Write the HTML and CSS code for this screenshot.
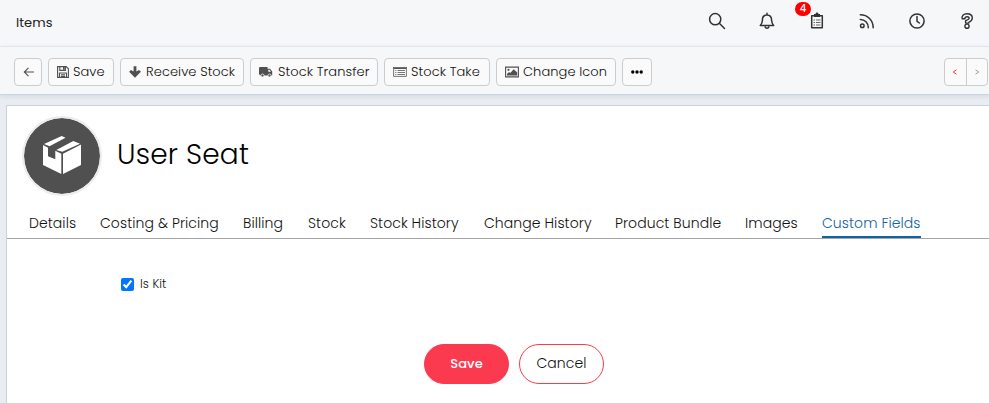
FILE: index.html
```html
<!DOCTYPE html>
<html lang="en">

<head>
    <meta charset="UTF-8">
    <meta name="viewport" content="width=device-width, initial-scale=1.0">
    <title>Items</title>
    <link rel="stylesheet" href="styles.css">
</head>

<body>
    <header class="topbar">
        <span class="page-name">Items</span>
        <nav class="top-icons">
            <a class="top-icon"><svg width="18" height="18" viewBox="0 0 18 18"><circle cx="7.2" cy="7.2" r="5.6" /><path d="M11.3 11.3l5.2 5.2" /></svg></a>
            <a class="top-icon"><svg width="18" height="18" viewBox="0 0 18 18"><path d="M9 1.200v1.600M2.300 13.400h13.400c-1.400-1.500-2.100-2.500-2.100-5.200C13.600 4.900 11.700 2.900 9 2.900S4.400 4.900 4.400 8.200c0 2.700-.7 3.700-2.100 5.200zM7.200 15c.4 1.500 3.200 1.500 3.600 0" /></svg></a>
            <a class="top-icon">
                <svg width="18" height="18" viewBox="0 0 18 18"><path d="M3.700 3.700h10.600v12.100H3.700z" /><path class="solid" d="M6 2h1.600a1.400 1.400 0 0 1 2.800 0H12v3H6z" /><path class="thin" d="M5.500 8h1.500M8 8h4.500M5.500 10.500h1.500M8 10.500h4.500M5.500 13h1.500M8 13h4.500" /></svg>
                <span class="badge">4</span>
            </a>
            <a class="top-icon"><svg width="18" height="18" viewBox="0 0 18 18"><circle cx="4.300" cy="13.700" r="1.800" /><path d="M2.300 7.500c4.600 0 8 3.400 8 8.300M2.300 2.800c7.400 0 12.900 5.500 12.900 13" /></svg></a>
            <a class="top-icon"><svg width="18" height="18" viewBox="0 0 18 18"><circle cx="9" cy="9" r="7.100" /><path d="M9 4.500V9.300l2.400 1.700" /></svg></a>
            <a class="top-icon"><svg width="18" height="18" viewBox="0 0 18 18"><path class="medium" d="M4.200 6.800C3.300 3.700 5.500 1.800 9 1.800c3.300 0 5.300 1.700 5.300 4.300 0 2.600-1.700 3.500-3.500 4.200v.8H7.600V8.700c1.600-.6 3.500-1 3.500-2.500 0-1-.8-1.500-2.100-1.500-1.400 0-2 .6-2.200 2.100z" /><circle class="medium" cx="9" cy="14.200" r="2.100" /></svg></a>
        </nav>
    </header>

    <div class="toolbar">
        <button class="btn back"><svg width="12" height="12" viewBox="0 0 12 12"><path class="line" d="M11 6H1.500M5.500 1.800L1.300 6l4.200 4.200" /></svg></button>
        <button class="btn save"><svg width="12" height="12" viewBox="0 0 12 12"><path class="line" d="M.6.600h8.600l2.200 2.200v8.600H.6zM2.800.600v3.800h5.600V.6M2.500 11.400V7h7v4.400M4 8.700h4M4 10.200h4" /><path d="M6 1h1.700v2.700H6z" /></svg><span class="label">Save</span></button>
        <button class="btn receive"><svg width="12" height="12" viewBox="0 0 12 12"><path d="M4.600.300h2.800v5.200L10 3.900l1.900 1.900L6 11.800.100 5.800 2 3.900l2.600 1.600z" /></svg><span class="label">Receive Stock</span></button>
        <button class="btn transfer"><svg width="14" height="12" viewBox="0 0 14 12"><path fill-rule="evenodd" d="M.8 1h7.700v1.800h2.600L13.200 5.400v4.200H1.200L0 8V1.800zM9.300 3.800v2h2.700l-1.500-2z" /><circle class="wheel" cx="3.500" cy="9.500" r="1.500" /><circle class="wheel" cx="10.500" cy="9.500" r="1.500" /></svg><span class="label">Stock Transfer</span></button>
        <button class="btn take"><svg width="14" height="12" viewBox="0 0 14 12"><path d="M0 1h14v2H0z" /><path class="line light" d="M.6 1.600h12.800v8.800H.6zM2.200 4.500h1.200M4.500 4.500h7.500M2.200 6.500h1.200M4.500 6.500h7.500M2.200 8.500h1.200M4.500 8.500h7.500" /></svg><span class="label">Stock Take</span></button>
        <button class="btn change"><svg width="14" height="12" viewBox="0 0 14 12"><path class="line" d="M.6 1.100h12.800v9.800H.6z" /><circle cx="3.500" cy="3.800" r="1.100" /><path d="M2 9.500V8l2-2 1.200 1 3.500-3.700 3.500 3.300v2.900z" /></svg><span class="label">Change Icon</span></button>
        <button class="btn more"><svg width="12" height="12" viewBox="0 0 12 12"><circle cx="1.800" cy="6" r="1.700" /><circle cx="6" cy="6" r="1.700" /><circle cx="10.200" cy="6" r="1.700" /></svg></button>
        <div class="pager">
            <button class="prev"><svg width="6" height="6" viewBox="0 0 6 6"><path d="M4.500.800L1.200 3l3.300 2.200" /></svg></button>
            <button class="next"><svg width="6" height="6" viewBox="0 0 6 6"><path d="M1.500.800L4.800 3 1.500 5.200" /></svg></button>
        </div>
    </div>

    <main class="card">
        <div class="item-head">
            <div class="avatar">
                <svg width="38" height="38" viewBox="0 0 38 38"><path d="M0 9l5 2.700v8.600l7.300 3v-8.600l6 3V38L0 29zM20 17.700L38 8.500V29l-18 9zM1 8L18.700 0l3.800 1.700L6.500 10.300zM13.300 14l17-9L37 7.700l-17.700 8z" /></svg>
            </div>
            <h1>User Seat</h1>
        </div>

        <ul class="tabs">
            <li>Details</li>
            <li>Costing &amp; Pricing</li>
            <li>Billing</li>
            <li>Stock</li>
            <li>Stock History</li>
            <li>Change History</li>
            <li>Product Bundle</li>
            <li>Images</li>
            <li class="active">Custom Fields</li>
        </ul>

        <form class="fields">
            <label class="check"><input type="checkbox" checked>Is Kit</label>
            <div class="actions">
                <button type="button" class="pill primary">Save</button>
                <button type="button" class="pill">Cancel</button>
            </div>
        </form>
    </main>
</body>

</html>
```
FILE: styles.css
```css
* {
    box-sizing: border-box;
    margin: 0;
    padding: 0;
}

body {
    height: 403px;
    overflow: hidden;
    background-color: #e9edf2;
    font-family: Poppins, Inter, "Open Sans", sans-serif;
    font-size: 14px;
    font-weight: 300;
    letter-spacing: 0.08px;
    color: #111;
}

button {
    font: inherit;
    letter-spacing: inherit;
    color: inherit;
    white-space: nowrap;
}

/* top bar */
.topbar {
    display: flex;
    justify-content: space-between;
    height: 47px;
    padding: 0 4px 0 16px;
    border-bottom: 1px solid #e9ecef;
    background-color: #f5f7f9;
}

.page-name {
    line-height: 45px;
    font-size: 13px;
    font-weight: 400;
    color: #222;
}

.top-icons {
    display: flex;
    gap: 14px;
    padding-top: 12px;
}

.top-icon {
    position: relative;
    width: 36px;
    height: 18px;
    text-align: center;
}

.top-icon svg {
    display: block;
    margin: 0 auto;
    fill: none;
    stroke: #333;
    stroke-width: 1.5;
    stroke-linecap: round;
    stroke-linejoin: round;
}

.top-icon .solid {
    fill: #333;
    stroke: none;
}

.top-icon .thin {
    stroke: #666;
    stroke-width: 1;
    stroke-linecap: butt;
}

.top-icon .medium {
    stroke-width: 1.4;
}

.badge {
    position: absolute;
    left: -4px;
    top: -10px;
    width: 16px;
    height: 14px;
    border-radius: 7px;
    background-color: #f00;
    color: #fff;
    font-size: 10px;
    font-weight: 500;
    line-height: 14px;
}

/* toolbar */
.toolbar {
    position: relative;
    display: flex;
    gap: 6px;
    height: 48px;
    padding: 11px 1px 0 14px;
    border-bottom: 1px solid #cbd5de;
    background-color: #f5f7f9;
    box-shadow: 0 1px 5px rgba(60, 80, 100, 0.14);
}

.btn {
    display: flex;
    align-items: center;
    gap: 5px;
    height: 28px;
    padding-left: 8px;
    border: 1px solid #ccc;
    border-radius: 4px;
    background-color: #fafafa;
    font-size: 13px;
}

.btn svg {
    flex: none;
    fill: #505050;
}

.btn .line {
    fill: none;
    stroke: #505050;
    stroke-width: 1.1;
}

.btn .light {
    stroke: #777;
    stroke-width: 1;
}

.btn .wheel {
    stroke: #fafafa;
    stroke-width: 0.8;
}

.back {
    width: 28px;
}

.save {
    gap: 4px;
    width: 66px;
}

.receive {
    width: 124px;
}

.transfer {
    width: 128px;
}

.take {
    gap: 4px;
    width: 106px;
}

.change {
    gap: 4px;
    width: 120px;
}

.more {
    width: 30px;
}

.more svg {
    fill: #000;
}

.pager {
    display: flex;
    width: 44px;
    height: 28px;
    margin-left: auto;
    border: 1px solid #ccc;
    border-radius: 4px;
    background-color: #fafafa;
}

.pager button {
    display: flex;
    flex: 1;
    align-items: center;
    justify-content: center;
    border: 0;
    background: none;
}

.pager .next {
    border-left: 1px solid #ccc;
}

.pager svg {
    fill: none;
    stroke: #999;
    stroke-width: 1;
}

.pager .prev svg {
    stroke: #f8394f;
}

/* item card */
.card {
    height: 310px;
    margin: 10px 0 0 6px;
    border-top: 1px solid #c8d3dd;
    border-left: 1px solid #c8d3dd;
    background-color: #fff;
}

.item-head {
    display: flex;
    align-items: center;
    gap: 15px;
    height: 100px;
    padding-left: 15px;
}

.avatar {
    display: flex;
    align-items: center;
    justify-content: center;
    width: 80px;
    height: 80px;
    border: 2px solid #ececec;
    border-radius: 50%;
    background-color: #505050;
    background-clip: padding-box;
}

.avatar svg {
    fill: #fff;
    margin-top: -2px;
}

h1 {
    padding-bottom: 2px;
    font-size: 28px;
    font-weight: 300;
    letter-spacing: 0.2px;
    line-height: 40px;
    color: #000;
}

.tabs {
    display: grid;
    grid-template-columns: 47px 119px 41px 38px 90px 107px 106px 53px 99px;
    gap: 24px;
    height: 33px;
    padding-left: 22px;
    border-bottom: 1px solid #a5a5a5;
    list-style: none;
    white-space: nowrap;
}

.tabs li {
    line-height: 34px;
    height: 32px;
}

.tabs .active {
    border-bottom: 2px solid #1362a3;
    color: #1362a3;
}

.fields {
    padding-top: 35px;
}

.check {
    display: flex;
    align-items: center;
    gap: 6px;
    height: 20px;
    margin-left: 114px;
    font-size: 12px;
}

.check input {
    width: 13px;
    height: 13px;
    accent-color: #0075ff;
}

.actions {
    display: flex;
    gap: 10px;
    margin: 50px 0 0 417px;
}

.pill {
    width: 85px;
    height: 40px;
    padding-bottom: 1px;
    border: 1px solid #fb3a50;
    border-radius: 20px;
    background-color: #fff;
}

.primary {
    background-color: #fb3a50;
    color: #fff;
    font-weight: 500;
    font-size: 13px;
}
```
